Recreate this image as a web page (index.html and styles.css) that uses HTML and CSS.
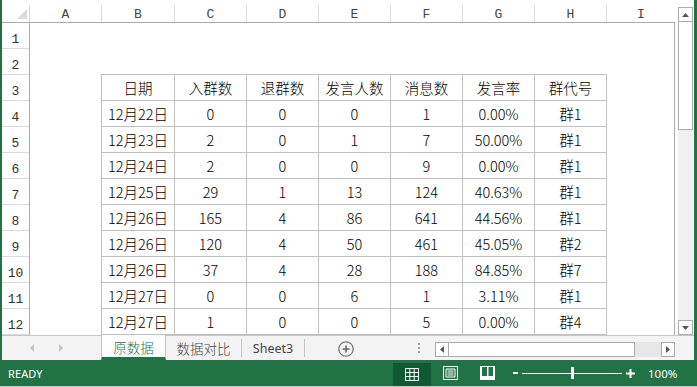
FILE: index.html
```html
<!DOCTYPE html>
<html lang="zh-CN">
<head>
<meta charset="utf-8">
<title>Sheet</title>
<link rel="stylesheet" href="styles.css">
</head>
<body>
<div class="app">
  <div class="frame">
    <div class="top">
      <div class="grid">
        <div class="colhdr">
          <div class="corner"><svg width="10" height="10" viewBox="0 0 10 10"><polygon points="10,0 10,10 0,10" fill="#dcdcdc"/></svg></div>
          <div class="ch w72">A</div>
          <div class="ch w73">B</div>
          <div class="ch w72">C</div>
          <div class="ch w72">D</div>
          <div class="ch w72">E</div>
          <div class="ch w72">F</div>
          <div class="ch w72">G</div>
          <div class="ch w72">H</div>
          <div class="ch last">I</div>
        </div>
        <div class="body">
          <div class="rowhdr">
            <div class="rh">1</div><div class="rh">2</div><div class="rh">3</div><div class="rh">4</div>
            <div class="rh">5</div><div class="rh">6</div><div class="rh">7</div><div class="rh">8</div>
            <div class="rh">9</div><div class="rh">10</div><div class="rh">11</div><div class="rh">12</div>
          </div>
          <div class="cells">
            <div class="data">
              <div class="c">日期</div><div class="c">入群数</div><div class="c">退群数</div><div class="c">发言人数</div><div class="c">消息数</div><div class="c">发言率</div><div class="c">群代号</div>
              <div class="c">12月22日</div><div class="c">0</div><div class="c">0</div><div class="c">0</div><div class="c">1</div><div class="c">0.00%</div><div class="c">群1</div>
              <div class="c">12月23日</div><div class="c">2</div><div class="c">0</div><div class="c">1</div><div class="c">7</div><div class="c">50.00%</div><div class="c">群1</div>
              <div class="c">12月24日</div><div class="c">2</div><div class="c">0</div><div class="c">0</div><div class="c">9</div><div class="c">0.00%</div><div class="c">群1</div>
              <div class="c">12月25日</div><div class="c">29</div><div class="c">1</div><div class="c">13</div><div class="c">124</div><div class="c">40.63%</div><div class="c">群1</div>
              <div class="c">12月26日</div><div class="c">165</div><div class="c">4</div><div class="c">86</div><div class="c">641</div><div class="c">44.56%</div><div class="c">群1</div>
              <div class="c">12月26日</div><div class="c">120</div><div class="c">4</div><div class="c">50</div><div class="c">461</div><div class="c">45.05%</div><div class="c">群2</div>
              <div class="c">12月26日</div><div class="c">37</div><div class="c">4</div><div class="c">28</div><div class="c">188</div><div class="c">84.85%</div><div class="c">群7</div>
              <div class="c">12月27日</div><div class="c">0</div><div class="c">0</div><div class="c">6</div><div class="c">1</div><div class="c">3.11%</div><div class="c">群1</div>
              <div class="c">12月27日</div><div class="c">1</div><div class="c">0</div><div class="c">0</div><div class="c">5</div><div class="c">0.00%</div><div class="c">群4</div>
            </div>
          </div>
        </div>
      </div>
      <div class="vscroll">
        <div class="sbtn"><svg width="7" height="4" viewBox="0 0 7 4"><polygon points="3.5,0 7,4 0,4" fill="#555"/></svg></div>
        <div class="vthumb"></div>
        <div class="vtrack"></div>
        <div class="sbtn"><svg width="7" height="4" viewBox="0 0 7 4"><polygon points="0,0 7,0 3.5,4" fill="#555"/></svg></div>
      </div>
    </div>
    <div class="tabbar">
      <div class="nav">
        <svg class="navl" width="4" height="8" viewBox="0 0 4 8"><polygon points="4,0 4,8 0,4" fill="#c3c3c3"/></svg>
        <svg class="navr" width="4" height="8" viewBox="0 0 4 8"><polygon points="0,0 4,4 0,8" fill="#c3c3c3"/></svg>
      </div>
      <div class="tab active">原数据</div>
      <div class="tab t2">数据对比</div>
      <div class="sep"></div>
      <div class="tab t3">Sheet3</div>
      <div class="sep"></div>
      <svg class="addsheet" width="16" height="16" viewBox="0 0 16 16"><circle cx="8" cy="8" r="7.2" fill="none" stroke="#7a7a7a" stroke-width="1.3"/><path d="M4.5 8h7M8 4.5v7" stroke="#666" stroke-width="1.6"/></svg>
      <div class="dots"><span></span><span></span><span></span></div>
      <div class="hscroll">
        <div class="hbtn"><svg width="4" height="7" viewBox="0 0 4 7"><polygon points="4,0 4,7 0,3.5" fill="#555"/></svg></div>
        <div class="hthumb"></div>
        <div class="htrack"></div>
        <div class="hbtn"><svg width="4" height="7" viewBox="0 0 4 7"><polygon points="0,0 4,3.5 0,7" fill="#555"/></svg></div>
      </div>
    </div>
  </div>
  <div class="status">
    <div class="ready">READY</div>
    <div class="right">
      <div class="vbtn">
        <svg width="14" height="13" viewBox="0 0 14 13"><path d="M0.5 0.5h13v12h-13zM4.8 0.5v12M9.2 0.5v12M0.5 4.5h13M0.5 8.5h13" fill="none" stroke="#fff" stroke-width="1"/></svg>
      </div>
      <svg class="ic2" width="15" height="14" viewBox="0 0 15 14"><path d="M0.5 0.5h14v13h-14z" fill="none" stroke="#fff"/><path d="M3 3h9v8H3z" fill="none" stroke="#fff"/><path d="M4.5 5h6M4.5 7h6M4.5 9h6" stroke="#fff"/></svg>
      <svg class="ic3" width="15" height="14" viewBox="0 0 15 14"><path d="M0 0h15v14H0z" fill="#fff"/><path d="M2 1h5v9H2zM8.5 1h4.5v9H8.5z" fill="#217346"/></svg>
      <div class="minus"></div>
      <div class="slider"><div class="sl"></div><div class="thumb"></div><div class="sl"></div></div>
      <svg class="plus" width="9" height="9" viewBox="0 0 9 9"><path d="M0 4.5h9M4.5 0v9" stroke="#fff" stroke-width="2"/></svg>
      <div class="zoom">100%</div>
    </div>
  </div>
</div>
</body>
</html>
```

FILE: styles.css
```css
* { box-sizing: border-box; }
html, body { margin: 0; padding: 0; }
body {
  width: 697px;
  height: 387px;
  overflow: hidden;
  background: #fff;
  font-family: "Noto Sans", "Noto Sans CJK SC", sans-serif;
}
.app { width: 697px; height: 387px; display: flex; flex-direction: column; }
.frame {
  height: 360px;
  border-left: 2px solid #217346;
  border-right: 3px solid #217346;
  display: flex;
  flex-direction: column;
  background: #fff;
}
.top { height: 335px; display: flex; }
.grid { width: 676px; display: flex; flex-direction: column; }

.colhdr {
  width: 673px;
  height: 23px;
  padding-top: 5px;
  display: flex;
  border-bottom: 1px solid #ababab;
  background: #fff;
}
.corner {
  width: 28px;
  border-right: 1px solid #d9d9d9;
  display: flex;
  justify-content: flex-end;
  align-items: flex-end;
  padding: 0 2px 3px 0;
}
.ch {
  border-right: 1px solid #dcdcdc;
  display: flex;
  align-items: center;
  justify-content: center;
  padding-top: 1px;
  font: 13px "Liberation Mono", monospace;
  color: #444;
}
.w72 { width: 72px; }
.w73 { width: 73px; }
.ch.last { flex: 1; border-right: none; }

.body { display: flex; height: 312px; }
.rowhdr { width: 28px; border-right: 1px solid #ababab; }
.rh {
  height: 26px;
  border-bottom: 1px solid #dadada;
  display: flex;
  align-items: flex-end;
  justify-content: center;
  padding-bottom: 1px;
  font: 13px/15px "Liberation Mono", monospace;
  color: #333;
}
.cells {
  width: 645px;
  border-right: 1px solid #ababab;
  padding-left: 71px;
  padding-top: 51px;
  overflow: hidden;
}
.data {
  display: grid;
  grid-template-columns: 73px repeat(6, 72px);
  width: max-content;
  border-top: 1px solid #c0c0c0;
  border-left: 1px solid #c0c0c0;
}
.c {
  height: 26px;
  border-right: 1px solid #c0c0c0;
  border-bottom: 1px solid #c0c0c0;
  display: flex;
  align-items: center;
  justify-content: center;
  padding-top: 1px;
  font: 300 14.5px/1 "Noto Sans CJK SC", sans-serif;
  color: #000;
}

.vscroll {
  width: 15px;
  height: 328px;
  margin-top: 7px;
  display: flex;
  flex-direction: column;
  background: #f0f0f0;
}
.sbtn {
  height: 15px;
  border: 1px solid #ababab;
  background: #fff;
  display: flex;
  align-items: center;
  justify-content: center;
}
.vthumb { height: 108px; border: 1px solid #ababab; border-top: none; background: #fff; }
.vtrack { flex: 1; }

.tabbar {
  height: 25px;
  border-top: 1px solid #c6c6c6;
  background: #f3f3f3;
  display: flex;
  align-items: flex-start;
}
.nav {
  width: 99px;
  height: 24px;
  display: flex;
  align-items: center;
  padding-left: 28px;
}
.navr { margin-left: 25px; }
.tab {
  height: 24px;
  display: flex;
  align-items: center;
  justify-content: center;
  font: 300 13.5px "Noto Sans CJK SC", sans-serif;
  color: #444;
}
.tab.active {
  width: 65px;
  height: 25px;
  margin-top: -1px;
  background: #fff;
  border-left: 1px solid #c6c6c6;
  border-right: 1px solid #c6c6c6;
  border-bottom: 3px solid #217346;
  color: #217346;
  padding-top: 1px;
}
.t2 { width: 75px; }
.t3 { width: 62px; font-family: "Noto Sans", sans-serif; font-weight: 400; font-size: 12.5px; }
.sep { width: 1px; height: 18px; margin-top: 3px; background: #c6c6c6; }
.addsheet { margin-left: 33px; margin-top: 5px; }
.dots {
  margin-left: 64px;
  margin-top: 7px;
  display: flex;
  flex-direction: column;
  gap: 2px;
}
.dots span { width: 2px; height: 2px; background: #a0a0a0; }
.hscroll {
  margin-left: 15px;
  margin-top: 6px;
  width: 240px;
  height: 15px;
  display: flex;
}
.hbtn {
  width: 14px;
  border: 1px solid #ababab;
  background: #fff;
  display: flex;
  align-items: center;
  justify-content: center;
}
.hthumb { width: 186px; border: 1px solid #ababab; border-left: none; background: #fff; }
.htrack { flex: 1; background: #e6e6e6; }

.status {
  height: 27px;
  background: #217346;
  border-bottom: 1px solid #c8c8c8;
  display: flex;
  align-items: center;
  color: #fff;
}
.ready { padding-left: 8px; font: 11px "Noto Sans", sans-serif; letter-spacing: 0.1px; }
.right {
  margin-left: auto;
  width: 304px;
  height: 26px;
  display: flex;
  align-items: center;
}
.vbtn {
  width: 38px;
  height: 23px;
  align-self: flex-end;
  background: #0f5a32;
  display: flex;
  align-items: center;
  justify-content: center;
  padding-bottom: 1px;
}
.ic2 { margin-left: 12px; }
.ic3 { margin-left: 22px; }
.minus { margin-left: 18px; width: 5px; height: 2px; background: #fff; }
.slider { margin-left: 4px; width: 100px; display: flex; align-items: center; }
.sl { flex: 1; height: 1px; background: #fff; }
.thumb { width: 3px; height: 12px; background: #fff; }
.plus { margin-left: 4px; }
.zoom { margin-left: 13px; font: 11.5px "Noto Sans", sans-serif; }
```
